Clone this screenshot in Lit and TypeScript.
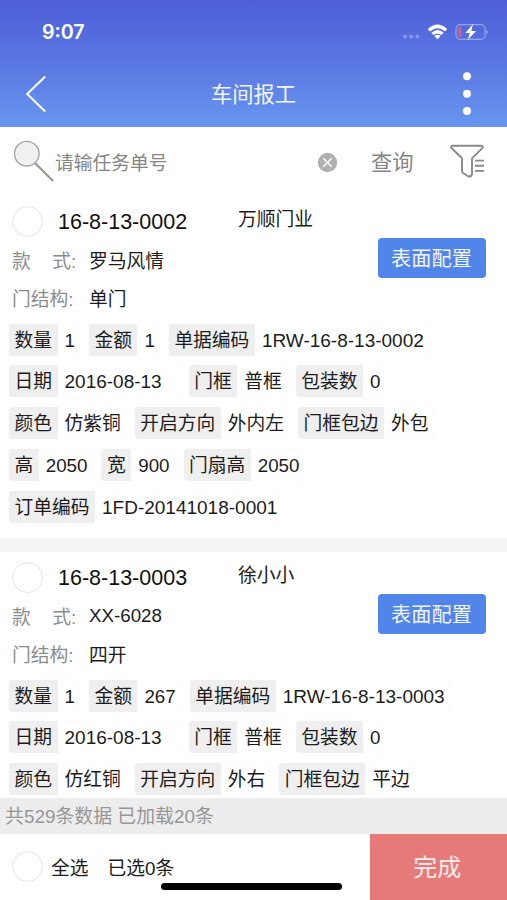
import { LitElement, html, css, svg } from "lit";
import { customElement, property } from "lit/decorators.js";
import { classMap } from "lit/directives/class-map.js";

interface Field {
  label: string;
  value: string;
  wide?: boolean;
}

interface Task {
  code: string;
  customer: string;
  style: string;
  structure: string;
  rows: Field[][];
}

const f = (label: string, value: string, wide = false): Field => ({ label, value, wide });

const tasks: Task[] = [
  {
    code: "16-8-13-0002",
    customer: "万顺门业",
    style: "罗马风情",
    structure: "单门",
    rows: [
      [f("数量", "1"), f("金额", "1"), f("单据编码", "1RW-16-8-13-0002")],
      [f("日期", "2016-08-13", true), f("门框", "普框"), f("包装数", "0")],
      [f("颜色", "仿紫铜"), f("开启方向", "外内左"), f("门框包边", "外包")],
      [f("高", "2050"), f("宽", "900"), f("门扇高", "2050")],
      [f("订单编码", "1FD-20141018-0001")],
    ],
  },
  {
    code: "16-8-13-0003",
    customer: "徐小小",
    style: "XX-6028",
    structure: "四开",
    rows: [
      [f("数量", "1"), f("金额", "267"), f("单据编码", "1RW-16-8-13-0003")],
      [f("日期", "2016-08-13", true), f("门框", "普框"), f("包装数", "0")],
      [f("颜色", "仿红铜"), f("开启方向", "外右"), f("门框包边", "平边")],
    ],
  },
];

@customElement("task-card")
class TaskCard extends LitElement {
  @property({ attribute: false }) task!: Task;

  static styles = css`
    :host {
      display: block;
      height: 342px;
      box-sizing: border-box;
      background: #fff;
      color: #1c1c1c;
      font-size: 18.75px;
      flex: none;
      white-space: nowrap;
    }
    .head {
      display: flex;
      align-items: center;
      box-sizing: border-box;
      height: 45px;
      padding: 7px 0 0 12px;
    }
    .check {
      width: 29px;
      height: 29px;
      border: 1px solid #e4e4e4;
      border-radius: 50%;
      flex: none;
    }
    .code {
      width: 180px;
      margin: 1px 0 0 15px;
      font-size: 21.5px;
      color: #111;
    }
    .customer { margin-top: -8px; }
    .info {
      display: flex;
      justify-content: space-between;
      padding: 0 21.5px 0 12px;
      height: 83px;
    }
    .line {
      display: flex;
      align-items: center;
      height: 38px;
    }
    .name {
      display: flex;
      width: 77px;
      color: #8c8c8c;
    }
    .gap { width: 21.5px; }
    .button {
      width: 108px;
      height: 40px;
      line-height: 42.5px;
      margin-top: -2.5px;
      border-radius: 4px;
      background: #5285ea;
      color: #f2f6ff;
      font-size: 20.2px;
      text-align: center;
    }
    .rows {
      display: flex;
      flex-direction: column;
      gap: 9.8px;
      padding-left: 9px;
    }
    .row {
      display: flex;
      gap: 10px;
      height: 32px;
      line-height: 34px;
    }
    .field {
      display: flex;
      border-radius: 4px;
      box-shadow: 0 0 1px #ececec;
    }
    .tag {
      padding: 0 5.5px;
      border-radius: 4px 0 0 4px;
      background: #efefef;
    }
    .value { padding: 0 4px 0 7px; }
    .long { font-size: 19px; }
    .wide { padding-right: 17px; }
  `;

  render() {
    const t = this.task;
    return html`
      <div class="head">
        <span class="check"></span>
        <span class="code">${t.code}</span>
        <span class="customer">${t.customer}</span>
      </div>
      <div class="info">
        <div>
          <div class="line">
            <span class="name">款<span class="gap"></span>式:</span><span>${t.style}</span>
          </div>
          <div class="line"><span class="name">门结构:</span><span>${t.structure}</span></div>
        </div>
        <div class="button">表面配置</div>
      </div>
      <div class="rows">
        ${t.rows.map(
          (row) => html`<div class="row">
            ${row.map(
              (x) => html`<div class="field">
                <span class="tag">${x.label}</span>
                <span class=${classMap({ value: true, wide: !!x.wide, long: x.value.length > 6 })}>${x.value}</span>
              </div>`
            )}
          </div>`
        )}
      </div>
    `;
  }
}

const wifi = svg`
  <path d="M.8 6.1Q10.5-3 20.2 6.1L17.9 8.5Q10.5 2.2 3.1 8.5Z"/>
  <path d="M4.3 9.8Q10.5 4.2 16.7 9.8L14.4 12.1Q10.5 8.9 6.6 12.1Z"/>
  <path d="M7.4 13.1Q10.5 10.4 13.6 13.1L10.5 16.5Z"/>`;

@customElement("app-root")
class AppRoot extends LitElement {
  static styles = css`
    :host {
      display: flex;
      flex-direction: column;
      width: 507px;
      height: 900px;
      overflow: hidden;
      background: #fff;
      font-family: "Liberation Sans", "Noto Sans CJK SC", sans-serif;
      white-space: nowrap;
    }
    .top {
      flex: none;
      height: 127px;
      color: #fff;
      background: linear-gradient(#4e5fd7, #5a77e2 50%, #6996f1);
    }
    .status {
      display: flex;
      align-items: center;
      justify-content: space-between;
      height: 63px;
      padding: 0 18px 0 42px;
    }
    .time {
      font: 600 19.6px Inter, sans-serif;
    }
    .signals { display: flex; align-items: center; }
    .cell { margin: 9px 7px 0 0; }
    .wifi { margin-right: 7px; }
    .nav {
      display: flex;
      align-items: center;
      justify-content: space-between;
      height: 62px;
      padding: 0 35px 0 25px;
    }
    .title {
      font-size: 21.3px;
      color: #f1f5ff;
      margin: -3px 2px 0 0;
    }
    .search {
      flex: none;
      display: flex;
      align-items: center;
      height: 68.5px;
      color: #858585;
    }
    .lens { margin: -1px 0 0 12px; }
    .hint {
      width: 262px;
      margin: 0 0 0 1px;
      font-size: 18.75px;
    }
    .clear { margin-top: 1.5px; }
    .query {
      width: 79px;
      margin: -1px 0 0 33px;
      font-size: 21.3px;
    }
    .list {
      flex: 1;
      min-height: 0;
      display: flex;
      flex-direction: column;
      gap: 14px;
      overflow: hidden;
      background: #f4f4f4;
    }
    .total {
      flex: none;
      height: 35.5px;
      line-height: 37px;
      padding-left: 5px;
      background: #ededed;
      color: #969696;
      font-size: 18.9px;
    }
    .foot {
      position: relative;
      flex: none;
      display: flex;
      align-items: center;
      height: 66.5px;
      padding-left: 12px;
      box-sizing: border-box;
      font-size: 18.75px;
      color: #1c1c1c;
    }
    .check {
      width: 29px;
      height: 29px;
      border: 1px solid #e4e4e4;
      border-radius: 50%;
    }
    .all { margin: 0 19px 0 8px; }
    .done {
      width: 137.5px;
      height: 66.5px;
      line-height: 68px;
      padding-right: 2px;
      box-sizing: border-box;
      margin-left: auto;
      background: #e67a79;
      color: #fcecea;
      font-size: 24px;
      text-align: center;
    }
    .home {
      position: absolute;
      left: 161px;
      bottom: 10px;
      width: 181px;
      height: 7px;
      border-radius: 4px;
      background: #000;
    }
  `;

  render() {
    return html`
      <div class="top">
        <div class="status">
          <span class="time">9:07</span>
          <span class="signals">
            <svg class="cell" width="18" height="5" fill="#8795ec">
              <circle cx="3" cy="2.5" r="2" /><circle cx="9.2" cy="2.5" r="2" /><circle cx="15.4" cy="2.5" r="2" />
            </svg>
            <svg class="wifi" width="21" height="17" fill="#fff">${wifi}</svg>
            <svg width="34" height="18" fill="none">
              <rect x="1" y="1.7" width="29" height="14.6" rx="4" stroke="#97a5ee" stroke-width="1.2" />
              <path d="M6.5 3.5H5Q2.8 3.5 2.8 6V12Q2.8 14.5 5 14.5H6.5Z" fill="#b566a4" />
              <path d="M31.5 6.5Q34.5 9 31.5 11.5Z" fill="#97a5ee" />
              <path d="M18 1L10.3 10H14.8L12.8 17L21 8H16.3Z" fill="#fff" />
            </svg>
          </span>
        </div>
        <div class="nav">
          <svg width="22" height="38" fill="none" stroke="#fff" stroke-width="2">
            <path d="M20.2 1.5L2.2 19L20.2 36.5" />
          </svg>
          <span class="title">车间报工</span>
          <svg width="10" height="46" fill="#fff">
            <circle cx="5" cy="5.3" r="4" /><circle cx="5" cy="22.8" r="4" /><circle cx="5" cy="40" r="4" />
          </svg>
        </div>
      </div>

      <div class="search">
        <svg class="lens" width="42" height="44" fill="none">
          <circle cx="14.8" cy="14.7" r="12.3" fill="#f0f0f0" stroke="#aaa59f" stroke-width="1.4" />
          <path d="M23 24L41 42" stroke="#96918c" stroke-width="1.9" />
        </svg>
        <span class="hint">请输任务单号</span>
        <svg class="clear" width="21" height="21">
          <circle cx="10.5" cy="10.5" r="9.7" fill="#b0b0b0" />
          <path d="M6.3 6.3L14.7 14.7M14.7 6.3L6.3 14.7" stroke="#fff" stroke-width="1.4" />
        </svg>
        <span class="query">查询</span>
        <svg width="35" height="36" fill="none" stroke="#8a8a8a" stroke-width="1.9" stroke-linejoin="round">
          <path d="M2.5 2.7H31Q33.5 2.7 32.5 4.8L22 15.3V31Q21.5 34 18.5 33.5L13 30Q12 29.3 12 28V15.3L1.3 4.8Q.5 2.9 2.5 2.7Z" />
          <path d="M25 17.6H34M25 22.7H34M25 27.9H34" />
        </svg>
      </div>

      <div class="list">${tasks.map((t) => html`<task-card .task=${t}></task-card>`)}</div>

      <div class="total">共529条数据 已加载20条</div>
      <div class="foot">
        <span class="check"></span>
        <span class="all">全选</span>
        <span>已选0条</span>
        <div class="done">完成</div>
        <div class="home"></div>
      </div>
    `;
  }
}
